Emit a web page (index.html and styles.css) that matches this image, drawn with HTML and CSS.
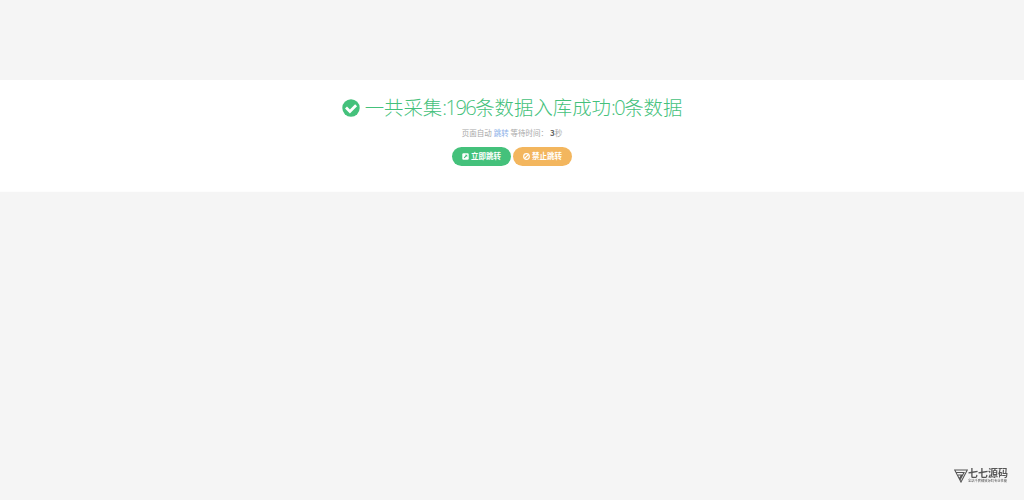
FILE: index.html
```
<!DOCTYPE html>
<html lang="zh">
<head>
  <meta charset="UTF-8" />
  <meta name="viewport" content="width=device-width, initial-scale=1.0" />
  <title>跳转提示</title>
  <link rel="stylesheet" href="styles.css">
</head>
<body>
  <main class="message">
    <h1>
      <svg class="icon-check" viewBox="0 0 18 18"><circle cx="9" cy="9" r="8.7" fill="currentColor"/><path d="M4 8.600l3.900 3.900 6.200-6.200" fill="none" stroke="#fff" stroke-width="2.800"/></svg>
      <span>一共采集<span class="num">:196</span>条数据入库成功<span class="num">:0</span>条数据</span>
    </h1>
    <p class="jump">页面自动 <a href="#" id="href">跳转</a> 等待时间： <b id="wait">3</b>秒</p>
    <div class="buttons">
      <a class="btn btn-success" href="#">
        <svg viewBox="0 0 12 12"><rect x="0.5" y="0.5" width="11" height="11" rx="2" fill="currentColor"/><path d="M5 3h4v4L7.700 5.700 4.400 9 3 7.600 6.300 4.300z" fill="#44c17b"/></svg>
        立即跳转
      </a>
      <a class="btn btn-warning" href="#">
        <svg viewBox="0 0 12 12"><circle cx="6" cy="6" r="4.800" fill="none" stroke="currentColor" stroke-width="2"/><path d="M9.200 2.800L2.800 9.200" stroke="currentColor" stroke-width="2"/></svg>
        禁止跳转
      </a>
    </div>
  </main>

  <div class="watermark">
    <svg viewBox="0 0 14 14"><path d="M.7 1h12.600L7 13zM2.500 3.500h7.500L6 11M4 6h3.500L5.500 9.500" fill="none" stroke="currentColor" stroke-width="1.100"/></svg>
    <div class="brand">
      <strong>七七源码</strong>
      <small>全站千套精致源码专业性能</small>
    </div>
  </div>
</body>
</html>
```

FILE: styles.css
```
:root {
  --bg: #f5f5f5;
  --green: #44c17b;
  --orange: #f3b65e;
}

body {
  margin: 0;
  padding-top: 80px;
  background: var(--bg);
  font-family: "Open Sans", "Noto Sans CJK SC", sans-serif;
}

.message {
  box-sizing: border-box;
  height: 112px;
  padding-top: 14px;
  background: #fff;
  border-bottom: 1px solid #fdfdfd;
  display: flex;
  flex-direction: column;
  align-items: center;
}

h1 {
  margin: 0;
  height: 28px;
  display: flex;
  align-items: center;
  gap: 5px;
  color: var(--green);
  font-size: 19.4px;
  font-weight: 300;
  line-height: 28px;
  white-space: nowrap;
}

.num {
  font-size: 20px;
  letter-spacing: -1.500px;
}

.icon-check {
  width: 18px;
  height: 18px;
}

.jump {
  margin: 5px 0 0;
  color: #a8a8a8;
  font-size: 7.5px;
  line-height: 12px;
  white-space: pre;
}

.jump a {
  color: #8cb0e8;
  text-decoration: none;
}

.jump b {
  color: #666;
  font-family: "Noto Sans CJK SC", sans-serif;
  font-size: 8px;
}

.buttons {
  display: flex;
  gap: 2px;
  margin-top: 8px;
}

.btn {
  box-sizing: border-box;
  width: 59px;
  height: 18.5px;
  border-radius: 10px;
  display: flex;
  align-items: center;
  justify-content: center;
  gap: 2px;
  color: #fff;
  font-size: 7.5px;
  font-weight: 700;
  line-height: 19px;
  text-decoration: none;
  white-space: nowrap;
}

.btn svg {
  width: 7px;
  height: 7px;
}

.btn-success {
  background: var(--green);
}

.btn-warning {
  background: var(--orange);
}

.watermark {
  position: fixed;
  right: 16px;
  bottom: 17px;
  display: flex;
  align-items: center;
  color: #555;
}

.watermark svg {
  width: 14px;
  height: 14px;
}

.brand {
  display: flex;
  flex-direction: column;
  width: 40px;
  font-family: "Liberation Serif", "Noto Sans CJK SC", serif;
}

.brand strong {
  font-size: 10px;
  line-height: 11px;
  white-space: nowrap;
}

.brand small {
  font-size: 3.250px;
  line-height: 4px;
  white-space: nowrap;
}
```
